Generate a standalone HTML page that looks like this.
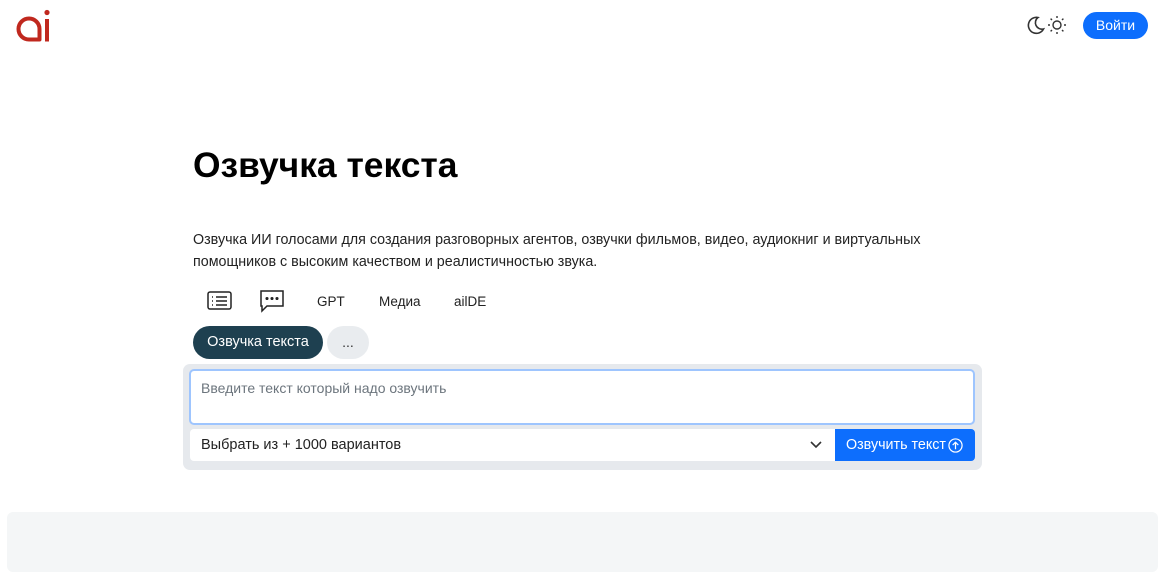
<!DOCTYPE html>
<html><head><meta charset="utf-8"><style>
body{margin:0;width:1176px;height:562px;background:#fff;font-family:"Liberation Sans",sans-serif;position:relative;overflow:hidden;color:#212529}
.a{position:absolute}
</style></head><body>
<svg class="a" style="left:0;top:0" width="60" height="50" viewBox="0 0 60 50">
<path d="M39.5 39.5 L39.5 29 A10.5 10.5 0 1 0 29 39.5 Z" fill="none" stroke="#c0281e" stroke-width="4" stroke-linejoin="round"/>
<rect x="45" y="19" width="4" height="22.5" fill="#c0281e"/>
<circle cx="47" cy="12.5" r="2.6" fill="#c0281e"/>
</svg>
<svg class="a" style="left:1026px;top:15px" width="20" height="20" viewBox="0 0 20 20"><path d="M12 2.5A8 8 0 1 0 17.5 14 6.5 6.5 0 0 1 12 2.5Z" fill="none" stroke="#333" stroke-width="1.6"/></svg>
<svg class="a" style="left:1047px;top:15px" width="20" height="20" viewBox="0 0 20 20" stroke="#333" stroke-width="1.4" fill="none"><circle cx="10" cy="10" r="4"/><path d="M10 1v2M10 17v2M1 10h2M17 10h2M3.6 3.6l1.4 1.4M15 15l1.4 1.4M3.6 16.4 5 15M15 5l1.4-1.4"/></svg>
<div class="a" style="left:1083px;top:12px;width:65px;height:27px;background:#0d6efd;border-radius:14px;color:#fff;font-size:14px;line-height:27px;text-align:center">Войти</div>
<div class="a" style="left:193px;top:145px;font-size:35.4px;font-weight:bold;color:#000">Озвучка текста</div>
<div class="a" style="left:193px;top:229px;width:760px;font-size:14.3px;line-height:22px;color:#222">Озвучка ИИ голосами для создания разговорных агентов, озвучки фильмов, видео, аудиокниг и виртуальных помощников с высоким качеством и реалистичностью звука.</div>
<svg class="a" style="left:207px;top:291px" width="25" height="20" viewBox="0 0 25 20" fill="none" stroke="#222" stroke-width="1.5"><rect x="1" y="1" width="23" height="17" rx="2"/><path d="M5 6h1M9 6h11M5 10h1M9 10h11M5 14h1M9 14h11"/></svg>
<svg class="a" style="left:259px;top:289px" width="26" height="24" viewBox="0 0 26 24" fill="none" stroke="#222" stroke-width="1.5"><path d="M2 2h22v15H8l-5 5V17H2Z"/><circle cx="8" cy="9.5" r=".8" fill="#222"/><circle cx="13" cy="9.5" r=".8" fill="#222"/><circle cx="18" cy="9.5" r=".8" fill="#222"/></svg>
<div class="a" style="left:317px;top:294px;font-size:13.5px;color:#222">GPT</div>
<div class="a" style="left:379px;top:294px;font-size:13.5px;color:#222">Медиа</div>
<div class="a" style="left:454px;top:294px;font-size:13.5px;color:#222">ailDE</div>
<div class="a" style="left:193px;top:326px;width:130px;height:33px;background:#1e4050;border-radius:17px;color:#fff;font-size:14.5px;line-height:33px;text-align:center">Озвучка текста</div>
<div class="a" style="left:327px;top:326px;width:42px;height:33px;background:#e9ecef;border-radius:17px;color:#333;font-size:14px;line-height:33px;text-align:center">...</div>
<div class="a" style="left:183px;top:364px;width:799px;height:106px;background:#e6e9ed;border-radius:7px"></div>
<div class="a" style="left:189px;top:369px;width:782px;height:52px;background:#fff;border:2px solid #9ec5fe;border-radius:5px"></div>
<div class="a" style="left:201px;top:380px;font-size:14px;color:#6c757d">Введите текст который надо озвучить</div>
<div class="a" style="left:190px;top:429px;width:645px;height:32px;background:#fff;border-radius:4px 0 0 4px"></div>
<div class="a" style="left:201px;top:437px;font-size:14.5px;color:#222">Выбрать из + 1000 вариантов</div>
<svg class="a" style="left:810px;top:440px" width="12" height="10" viewBox="0 0 12 10"><path d="M1 2l5 5 5-5" fill="none" stroke="#333" stroke-width="1.6"/></svg>
<div class="a" style="left:835px;top:429px;width:140px;height:32px;background:#0d6efd;border-radius:0 4px 4px 0;color:#fff;font-size:14.3px;line-height:32px;padding-left:11px;box-sizing:border-box">Озвучить текст</div>
<svg class="a" style="left:948px;top:438px" width="15" height="15" viewBox="0 0 16 16" fill="none" stroke="#fff" stroke-width="1.3"><circle cx="8" cy="8" r="7"/><path d="M8 12V4.5M5 7.5l3-3 3 3"/></svg>
<div class="a" style="left:7px;top:512px;width:1151px;height:60px;background:#f4f6f7;border-radius:6px"></div>
</body></html>
